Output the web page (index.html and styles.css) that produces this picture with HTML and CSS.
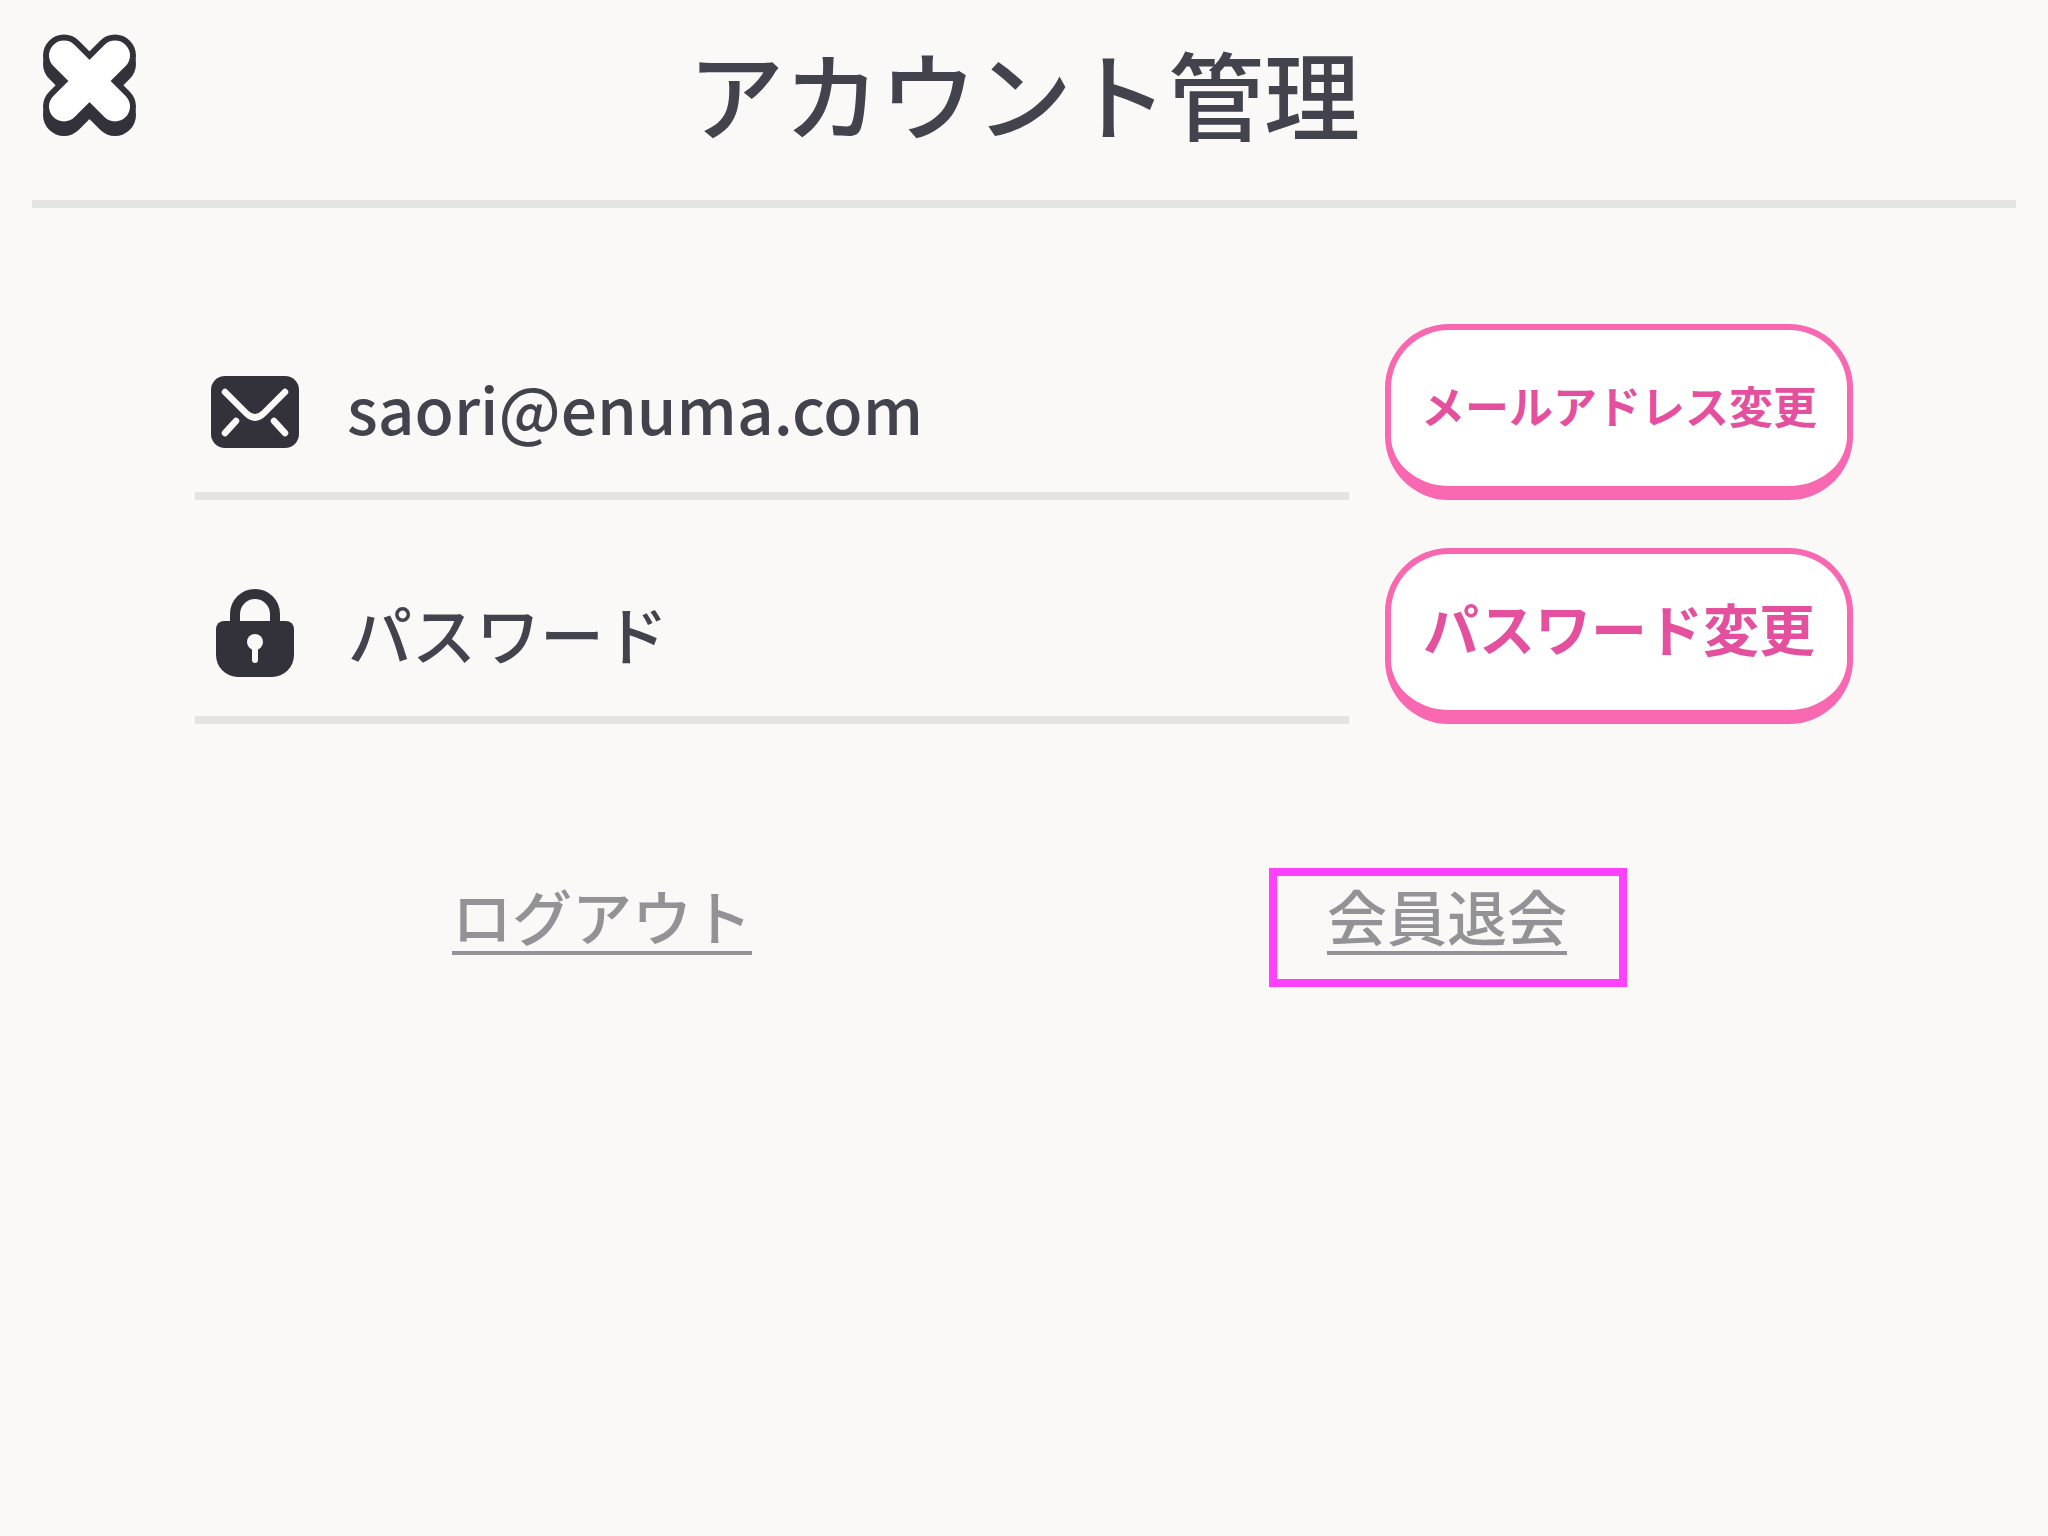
FILE: index.html
```html
<!DOCTYPE html>
<html lang="ja">
<head>
<meta charset="utf-8">
<title>アカウント管理</title>
<link rel="stylesheet" href="styles.css">
</head>
<body>
<header class="header">
  <button class="close" aria-label="閉じる">
    <svg class="close-icon" viewBox="0 0 100 110" width="100" height="110">
      <g class="x-dark"><path d="M24 34 75 85M75 34 24 85"/></g>
      <g class="x-dark"><path d="M24 25.5 75 76.5M75 25.5 24 76.5"/></g>
      <g class="x-white"><path d="M24 25.5 75 76.5M75 25.5 24 76.5"/></g>
    </svg>
  </button>
  <h1 class="title">アカウント管理</h1>
</header>
<main class="main">
  <section class="row">
    <div class="field">
      <span class="icon-cell">
        <svg viewBox="0 0 88 72" width="88" height="72">
          <rect class="ico-fill" width="88" height="72" rx="14"/>
          <path class="ico-line" d="M14 16 35 37Q44 46 53 37L74 16M14 57 25 45M63 45 74 57"/>
        </svg>
      </span>
      <span class="value value-email">saori@enuma.com</span>
    </div>
    <button class="pill pill-small">メールアドレス変更</button>
  </section>
  <section class="row">
    <div class="field">
      <span class="icon-cell icon-cell-lock">
        <svg viewBox="0 0 78 88" width="78" height="88">
          <path class="shackle" d="M19 36V25a20 20 0 0 1 40 0V36"/>
          <path class="ico-fill" d="M8 32H70A8 8 0 0 1 78 40V66A22 22 0 0 1 56 88H22A22 22 0 0 1 0 66V40A8 8 0 0 1 8 32Z"/>
          <circle class="key" cx="39" cy="53" r="8"/>
          <path class="ico-key" d="M39 55V71"/>
        </svg>
      </span>
      <span class="value">パスワード</span>
    </div>
    <button class="pill">パスワード変更</button>
  </section>
  <nav class="links">
    <a class="link link-logout" href="#"><span class="link-text">ログアウト</span></a>
    <a class="link link-quit" href="#"><span class="link-text">会員退会</span></a>
  </nav>
</main>
</body>
</html>
```
FILE: styles.css
```css
* { box-sizing: border-box; }
html, body { margin: 0; height: 100%; }
body {
  width: 2048px;
  height: 1536px;
  overflow: hidden;
  background: #faf9f7;
  color: #43434e;
  font-family: "Noto Sans CJK JP", "Noto Sans", sans-serif;
}
.header {
  margin: 0 32px;
  height: 208px;
  border-bottom: 8px solid #e4e4e2;
  display: grid;
  grid-template-columns: 120px 1fr 120px;
  align-items: start;
}
.close {
  grid-column: 1;
  grid-row: 1;
  margin: 30px 0 0 8px;
  padding: 0;
  width: 100px;
  height: 110px;
  border: 0;
  background: none;
}
.close-icon { display: block; }
.x-dark path { fill: none; stroke: #33323a; stroke-width: 42; stroke-linecap: round; }
.x-white path { fill: none; stroke: #fff; stroke-width: 30; stroke-linecap: round; }
.title {
  grid-column: 2;
  grid-row: 1;
  margin: 22px 0 0;
  text-align: center;
  font-size: 96px;
  line-height: 140px;
  font-weight: 500;
}
.main { padding: 116px 0 0 195px; }
.row {
  display: flex;
  gap: 36px;
  margin-bottom: 48px;
}
.field {
  width: 1154px;
  height: 176px;
  border-bottom: 8px solid #e4e4e2;
  display: flex;
  align-items: center;
  gap: 33px;
}
.icon-cell {
  width: 120px;
  padding-top: 8px;
  display: flex;
  justify-content: center;
}
.icon-cell-lock { padding-top: 2px; }
.icon-cell svg { display: block; }
.ico-fill { fill: #33323a; }
.ico-line { fill: none; stroke: #faf9f7; stroke-width: 6.5; stroke-linecap: round; stroke-linejoin: round; }
.shackle { fill: none; stroke: #33323a; stroke-width: 10; }
.key { fill: #faf9f7; }
.ico-key { fill: none; stroke: #faf9f7; stroke-width: 6; stroke-linecap: round; }
.value { font-size: 64px; line-height: 80px; font-weight: 500; }
.value-email { padding-bottom: 3px; margin-left: -1px; }
.pill {
  width: 468px;
  height: 176px;
  padding: 0 0 11px;
  border: 6px solid #f868b0;
  border-bottom-width: 14px;
  border-radius: 64px;
  background: #fff;
  color: #e5509e;
  font-family: inherit;
  font-size: 56px;
  font-weight: 700;
  line-height: 1.2;
  white-space: nowrap;
}
.pill-small { font-size: 44px; padding-bottom: 6px; }
.links {
  display: flex;
  align-items: flex-start;
  margin-top: 144px;
  padding-left: 257px;
}
.link {
  color: #929297;
  font-size: 60px;
  font-weight: 500;
  text-decoration: none;
  line-height: 72px;
}
.link-text {
  display: inline-block;
  border-bottom: 4px solid #929297;
}
.link-logout { padding-top: 11px; }
.link-quit {
  margin-left: 517px;
  padding: 3px 52px 0 50px;
  height: 119px;
  border: 8px solid #ff40ff;
}
```
